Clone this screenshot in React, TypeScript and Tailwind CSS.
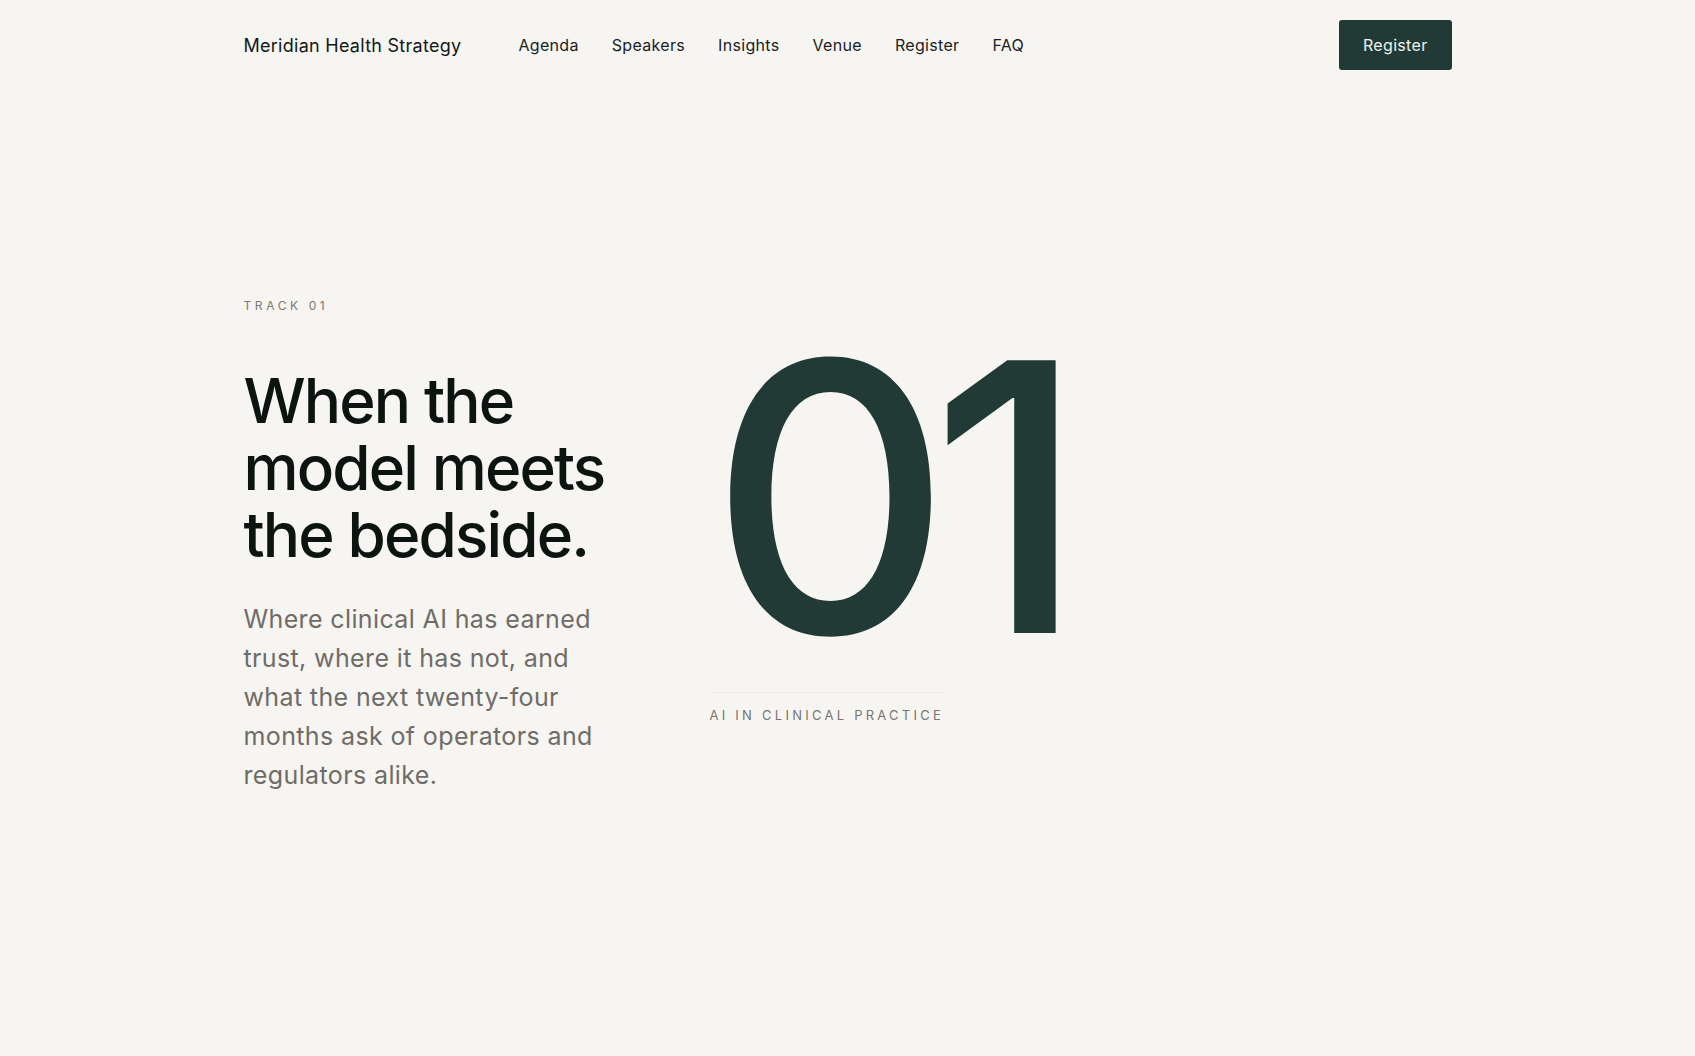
import React from "react";

const navLinks = ["Agenda", "Speakers", "Insights", "Venue", "Register", "FAQ"];

export default function App() {
  return (
    <div
      className="min-h-screen bg-[#f6f5f1] text-[#111a17]"
      style={{ fontFamily: "Inter, 'Noto Sans', 'Liberation Sans', sans-serif" }}
    >
      <header className="mx-auto flex h-[90px] w-[1208px] items-center">
        <a href="#" className="text-[18px] font-normal tracking-[0.015em] text-[#121816]">
          Meridian Health Strategy
        </a>
        <nav className="ml-[57px] flex items-center gap-[33px]">
          {navLinks.map((l) => (
            <a key={l} href="#" className="text-[16px] tracking-[0.02em] text-[#1a211f]">
              {l}
            </a>
          ))}
        </nav>
        <button className="ml-auto flex h-[50px] items-center rounded-[3px] bg-[#213a35] px-6 text-[16px] tracking-[0.02em] text-[#eef2ef]">
          Register
        </button>
      </header>

      <main className="mx-auto flex w-[1208px] items-start pt-[208px]">
        <section className="w-[400px] shrink-0">
          <p className="text-[12px] leading-4 tracking-[0.3em] text-[#7a7873]">TRACK 01</p>
          <h1 className="mt-[53px] text-[62px] font-medium leading-[67px] tracking-[-0.03em] text-[#0c1412]">
            When the
            <br />
            model meets
            <br />
            the bedside.
          </h1>
          <p className="mt-8 w-[372px] text-[25px] leading-[39px] tracking-[0.015em] text-[#6f6c67]">
            Where clinical AI has earned trust, where it has not, and what the next twenty-four months ask of
            operators and regulators alike.
          </p>
        </section>

        <section className="ml-[66px] mt-[11px] flex flex-col">
          <div className="text-[375px] font-medium leading-none tracking-[-0.057em] text-[#213a35]">01</div>
          <div className="mt-2 w-fit border-t border-[#ecebe6] pt-3 text-[13px] leading-5 tracking-[0.25em] text-[#77756f]">
            AI IN CLINICAL PRACTICE
          </div>
        </section>
      </main>
    </div>
  );
}
